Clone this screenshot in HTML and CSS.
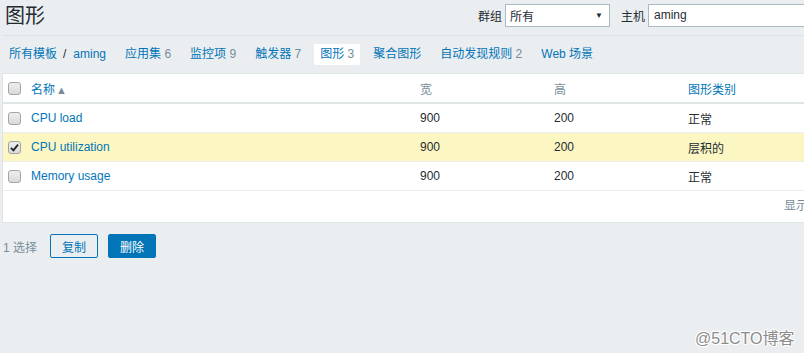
FILE: index.html
```html
<!DOCTYPE html>
<html lang="zh">
<head>
<meta charset="utf-8">
<title>图形</title>
<link rel="stylesheet" href="styles.css">
</head>
<body>
<div class="page">
  <header class="header">
    <h1 class="title">图形</h1>
    <form class="filter">
      <label class="flabel">群组</label>
      <div class="select"><span>所有</span><span class="arrow">▼</span></div>
      <label class="flabel host">主机</label>
      <div class="input">aming</div>
    </form>
  </header>

  <nav class="nav">
    <span class="item"><a>所有模板</a><span class="slash">/</span><a>aming</a></span>
    <span class="item"><a>应用集</a> <span class="cnt">6</span></span>
    <span class="item"><a>监控项</a> <span class="cnt">9</span></span>
    <span class="item"><a>触发器</a> <span class="cnt">7</span></span>
    <span class="item selected"><a>图形</a> <span class="cnt">3</span></span>
    <span class="item"><a>聚合图形</a></span>
    <span class="item"><a>自动发现规则</a> <span class="cnt">2</span></span>
    <span class="item"><a>Web 场景</a></span>
  </nav>

  <div class="list">
    <div class="row head">
      <div class="c c1"><span class="cb"></span></div>
      <div class="c c2"><a>名称</a><span class="sort">▲</span></div>
      <div class="c c3 grey">宽</div>
      <div class="c c4 grey">高</div>
      <div class="c c5"><a>图形类别</a></div>
    </div>
    <div class="row">
      <div class="c c1"><span class="cb"></span></div>
      <div class="c c2"><a>CPU load</a></div>
      <div class="c c3">900</div>
      <div class="c c4">200</div>
      <div class="c c5">正常</div>
    </div>
    <div class="row sel">
      <div class="c c1"><span class="cb on"><svg viewBox="0 0 13 13" width="13" height="13"><path d="M3 6.8 L5.4 9.3 L10 3.6" fill="none" stroke="#222" stroke-width="1.8"/></svg></span></div>
      <div class="c c2"><a>CPU utilization</a></div>
      <div class="c c3">900</div>
      <div class="c c4">200</div>
      <div class="c c5">层积的</div>
    </div>
    <div class="row">
      <div class="c c1"><span class="cb"></span></div>
      <div class="c c2"><a>Memory usage</a></div>
      <div class="c c3">900</div>
      <div class="c c4">200</div>
      <div class="c c5">正常</div>
    </div>
    <div class="foot">显示 3，共找到 3</div>
  </div>

  <div class="actions">
    <span class="selcount">1 选择</span>
    <button class="btn alt">复制</button>
    <button class="btn primary">删除</button>
  </div>
</div>
<div class="watermark">@51CTO博客</div>
</body>
</html>
```

FILE: styles.css
```css
html {
  overflow: hidden;
  background: #ebeef0;
}
body {
  margin: 0;
  font-family: "Liberation Sans", "Noto Sans CJK SC", sans-serif;
  font-size: 12px;
  color: #1f2c33;
  position: relative;
  height: 353px;
}
.page {
  width: 880px;
  padding: 0 3px 0 2px;
}
a {
  color: #0275b8;
  text-decoration: none;
}
.header {
  display: flex;
  align-items: center;
  height: 31px;
  padding-bottom: 4px;
  border-bottom: 1px solid #dde3e6;
}
.title {
  margin: 0 0 0 3px;
  font-size: 20px;
  font-weight: normal;
  line-height: 24px;
  color: #1f2c33;
}
.filter {
  margin: 0 0 0 auto;
  display: flex;
  align-items: center;
}
.flabel {
  margin-right: 3px;
}
.flabel.host {
  margin-left: 11px;
}
.select {
  border: 1px solid #acbbc2;
  background: #fff;
  display: flex;
  align-items: center;
  justify-content: space-between;
  padding: 0 6px 0 4px;
  box-sizing: border-box;
  width: 105px;
  height: 23px;
}
.arrow {
  font-size: 8px;
  color: #1f2c33;
}
.input {
  width: 234px;
  height: 23px;
  box-sizing: border-box;
  border: 1px solid #acbbc2;
  background: #fff;
  padding: 0 5px;
  line-height: 21px;
}
.nav {
  display: flex;
  gap: 7px;
  margin: 8px 0 8px 1px;
  height: 21px;
}
.item {
  padding: 0 6px;
  line-height: 21px;
  border-radius: 2px;
  white-space: nowrap;
}
.item.selected {
  background: #fff;
}
.slash {
  margin: 0 7px 0 6px;
  color: #1f2c33;
}
.cnt, .grey {
  color: #768d99;
}
.list {
  background: #fff;
  border: 1px solid #dfe4e7;
}
.row {
  display: grid;
  grid-template-columns: 23px 389px 134px 134px 1fr;
  height: 28px;
  border-bottom: 1px solid #ebeef0;
  align-items: center;
}
.row.head {
  border-bottom: 2px solid #dfe4e7;
}
.row.sel {
  background: #fcf7c2;
}
.c {
  padding-left: 5px;
  white-space: nowrap;
}
.c1 {
  display: flex;
  align-items: center;
}
.sort {
  color: #768d99;
  font-size: 11px;
  margin-left: 1px;
}
.cb {
  display: inline-block;
  width: 13px;
  height: 13px;
  box-sizing: border-box;
  border: 1px solid #a4a4a4;
  border-radius: 3px;
  background: linear-gradient(#eeeeee, #d9d9d9);
  position: relative;
}
.cb svg {
  position: absolute;
  left: -1px;
  top: -1px;
}
.foot {
  height: 31px;
  line-height: 31px;
  text-align: right;
  padding-right: 5px;
  color: #768d99;
}
.actions {
  display: flex;
  align-items: center;
  margin-top: 11px;
  padding-left: 1px;
}
.selcount {
  color: #768d99;
  margin-right: 13px;
}
.btn {
  font-family: inherit;
  font-size: 12px;
  width: 48px;
  height: 24px;
  border: 1px solid #0275b8;
  border-radius: 2px;
  padding: 0;
  margin-right: 10px;
}
.btn.alt {
  background: transparent;
  color: #0275b8;
}
.btn.primary {
  background: #0275b8;
  color: #fff;
}
.watermark {
  position: absolute;
  left: 695px;
  top: 325px;
  font-size: 16px;
  color: #8c8c8c;
  text-shadow: 1px 1px 0 #fff, -1px -1px 0 #fff, 1px -1px 0 #fff, -1px 1px 0 #fff;
  white-space: nowrap;
}
```
